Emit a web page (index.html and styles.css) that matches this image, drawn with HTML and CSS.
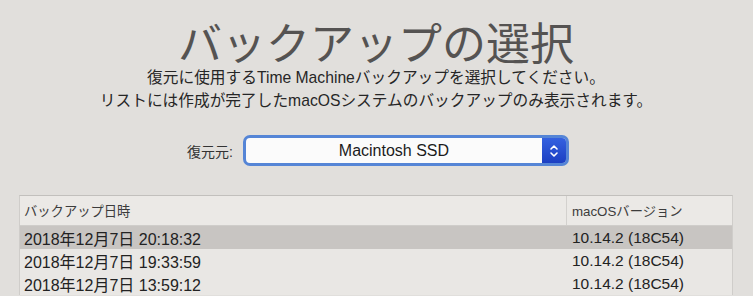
FILE: index.html
```html
<!DOCTYPE html>
<html lang="ja">
<head>
  <meta charset="UTF-8">
  <meta name="viewport" content="width=device-width, initial-scale=1.0">
  <title>バックアップの選択</title>
  <link rel="stylesheet" href="styles.css">
</head>
<body>
  <div class="pane">
    <h1 class="title">バックアップの選択</h1>
    <p class="intro">復元に使用するTime Machineバックアップを選択してください。<br>リストには作成が完了したmacOSシステムのバックアップのみ表示されます。</p>

    <div class="source">
      <span class="source-label">復元元:</span>
      <div class="popup">
        <span class="popup-value">Macintosh SSD</span>
        <span class="stepper">
          <svg width="10" height="16" viewBox="0 0 10 16">
            <path d="M2 6 L5 3 L8 6 M2 10 L5 13 L8 10" fill="none" stroke="#fff" stroke-width="1.6" stroke-linecap="round" stroke-linejoin="round"/>
          </svg>
        </span>
      </div>
    </div>

    <div class="table">
      <div class="row head">
        <div class="cell date">バックアップ日時</div>
        <div class="cell version">macOSバージョン</div>
      </div>
      <div class="row selected">
        <div class="cell date">2018年12月7日 20:18:32</div>
        <div class="cell version">10.14.2 (18C54)</div>
      </div>
      <div class="row">
        <div class="cell date">2018年12月7日 19:33:59</div>
        <div class="cell version">10.14.2 (18C54)</div>
      </div>
      <div class="row">
        <div class="cell date">2018年12月7日 13:59:12</div>
        <div class="cell version">10.14.2 (18C54)</div>
      </div>
    </div>
  </div>
</body>
</html>
```

FILE: styles.css
```css
body {
  margin: 0;
  background: #e1dfdc;
  font-family: "Liberation Sans", "Noto Sans CJK JP", sans-serif;
  color: #222;
  overflow: hidden;
}

.pane {
  padding: 16px 20px 0 19px;
}

.title {
  margin: 0;
  text-align: center;
  font-family: "Noto Sans CJK JP", sans-serif;
  font-size: 44px;
  font-weight: 400;
  line-height: 50px;
  color: #555352;
}

.intro {
  margin: 0;
  text-align: center;
  font-size: 15.7px;
  line-height: 23px;
  color: #262626;
}

.source {
  display: flex;
  align-items: center;
  justify-content: center;
  gap: 10px;
  margin-top: 23px;
  padding-left: 4px;
}

.source-label {
  font-size: 14px;
  color: #333;
}

.popup {
  display: flex;
  align-items: stretch;
  width: 320px;
  height: 25px;
  border: 3px solid #5585d6;
  border-radius: 7px;
  background: #fbfbfb;
  overflow: hidden;
}

.popup-value {
  flex: 1;
  text-align: center;
  font-size: 16px;
  line-height: 25px;
  color: #1c1c1c;
}

.stepper {
  width: 24px;
  display: flex;
  align-items: center;
  justify-content: center;
  background: linear-gradient(#3461e0, #1c3fc2);
}

.table {
  margin-top: 29px;
  border-top: 1px solid #c2c0bd;
  border-left: 1px solid #cfcdca;
  border-right: 1px solid #cfcdca;
  background: #e9e7e4;
}

.row {
  display: flex;
  height: 23px;
  align-items: center;
}

.row.head {
  height: 29px;
  background: #ebe9e6;
  border-bottom: 1px solid #cfcdca;
  color: #3c3c3c;
}

.row.selected {
  background: #c8c5c2;
}

.cell {
  white-space: nowrap;
}

.date {
  flex: 1;
  padding-left: 4px;
  font-size: 16px;
}

.version {
  width: 160px;
  padding-left: 5px;
  font-size: 15.5px;
}

.head .date,
.head .version {
  font-size: 13.3px;
  height: 100%;
  display: flex;
  align-items: center;
}

.head .version {
  border-left: 1px solid #d3d1ce;
}
```
